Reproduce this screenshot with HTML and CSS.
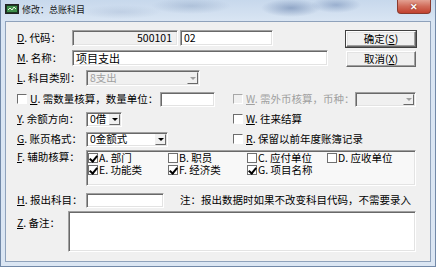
FILE: index.html
```html
<!DOCTYPE html>
<html lang="zh-CN">
<head>
    <meta charset="UTF-8">
    <title>修改：总账科目</title>
    <link rel="stylesheet" href="styles.css">
</head>
<body>
    <div class="window">
        <div class="titlebar">
            <svg class="app-icon" width="14" height="10" viewBox="0 0 14 10">
                <rect x="0.5" y="0.5" width="13" height="9" fill="#1c3a24" stroke="#222"/>
                <rect x="2" y="2" width="10" height="6" fill="#3f8f4a"/>
                <path d="M3 6 L5 4 L7 6 L9 3 L11 5" fill="none" stroke="#e8f5e0" stroke-width="1"/>
            </svg>
            <span class="title">修改：总账科目</span>
            <span class="close-btn">✕</span>
        </div>

        <div class="client">
            <div class="top-section">
                <div class="top-fields">
                    <div class="row">
                        <span class="label label-sm"><u>D</u>. 代码：</span>
                        <span class="field field-readonly field-code">500101</span>
                        <span class="field field-sub">02</span>
                    </div>
                    <div class="row row-gap">
                        <span class="label label-sm"><u>M</u>. 名称：</span>
                        <span class="field field-name">项目支出</span>
                    </div>
                    <div class="row row-gap">
                        <span class="label"><u>L</u>. 科目类别：</span>
                        <span class="select select-disabled select-type">
                            <span class="select-text">8支出</span>
                            <span class="select-arrow"></span>
                        </span>
                    </div>
                </div>
                <div class="buttons">
                    <span class="btn btn-default">确定(<u>S</u>)</span>
                    <span class="btn">取消(<u>X</u>)</span>
                </div>
            </div>

            <div class="options">
                <div class="row">
                    <span class="cbox"></span>
                    <span class="opt-label"><u>U</u>. 需数量核算，数量单位：</span>
                    <span class="field field-unit"></span>
                </div>
                <div class="row">
                    <span class="cbox cbox-disabled"></span>
                    <span class="opt-text disabled"><u>W</u>. 需外币核算，币种：</span>
                    <span class="select select-disabled select-currency">
                        <span class="select-text"></span>
                        <span class="select-arrow"></span>
                    </span>
                </div>

                <div class="row">
                    <span class="label"><u>Y</u>. 余额方向：</span>
                    <span class="select select-dir">
                        <span class="select-text">0借</span>
                        <span class="select-arrow"></span>
                    </span>
                </div>
                <div class="row">
                    <span class="cbox"></span>
                    <span class="opt-text"><u>W</u>. 往来结算</span>
                </div>

                <div class="row">
                    <span class="label"><u>G</u>. 账页格式：</span>
                    <span class="select select-format">
                        <span class="select-text">0金额式</span>
                        <span class="select-arrow"></span>
                    </span>
                </div>
                <div class="row">
                    <span class="cbox"></span>
                    <span class="opt-text"><u>R</u>. 保留以前年度账簿记录</span>
                </div>
            </div>

            <div class="row-aux">
                <span class="label"><u>F</u>. 辅助核算：</span>
                <div class="aux-box">
                    <span class="aux-item"><span class="chk checked"></span>A. 部门</span>
                    <span class="aux-item"><span class="chk"></span>B. 职员</span>
                    <span class="aux-item"><span class="chk"></span>C. 应付单位</span>
                    <span class="aux-item"><span class="chk"></span>D. 应收单位</span>
                    <span class="aux-item"><span class="chk checked"></span>E. 功能类</span>
                    <span class="aux-item"><span class="chk checked"></span>F. 经济类</span>
                    <span class="aux-item"><span class="chk checked"></span>G. 项目名称</span>
                </div>
            </div>

            <div class="row row-report">
                <span class="label"><u>H</u>. 报出科目：</span>
                <span class="field field-report"></span>
                <span class="note">注：报出数据时如果不改变科目代码，不需要录入</span>
            </div>

            <div class="row-memo">
                <span class="label label-memo"><u>Z</u>. 备注：</span>
                <span class="field memo"></span>
            </div>
        </div>
    </div>
</body>
</html>
```

FILE: styles.css
```css
/* Base */
* {
    margin: 0;
    padding: 0;
    box-sizing: border-box;
}

body {
    width: 436px;
    height: 267px;
    overflow: hidden;
    font-family: "Noto Sans CJK SC", "Noto Sans", sans-serif;
    font-size: 10.5px;
    line-height: 12px;
    color: #000;
    background: #d6e3f2;
}

u {
    text-decoration: underline;
    text-underline-offset: 1px;
}

/* Window frame */
.window {
    width: 436px;
    height: 267px;
    display: flex;
    flex-direction: column;
    padding: 0 4px 4px;
    border: 1px solid #7289a8;
    border-top: none;
    background:
        radial-gradient(ellipse 40px 8px at 190px 6px, rgba(120, 145, 180, 0.35), transparent),
        radial-gradient(ellipse 30px 9px at 290px 8px, rgba(70, 100, 150, 0.45), transparent),
        radial-gradient(ellipse 25px 8px at 335px 5px, rgba(80, 110, 160, 0.4), transparent),
        radial-gradient(ellipse 40px 7px at 120px 12px, rgba(150, 170, 200, 0.3), transparent),
        linear-gradient(to bottom, #c7d8ec 0, #d9e5f3 21px, #dbe6f3 100%);
}

.titlebar {
    height: 21px;
    display: flex;
    align-items: flex-start;
}

.app-icon {
    margin-top: 4px;
    flex-shrink: 0;
}

.title {
    margin-left: 3px;
    margin-top: 4px;
    font-size: 9px;
    line-height: 11px;
    color: #1a1a1a;
}

.close-btn {
    margin-left: auto;
    width: 34px;
    height: 14px;
    display: flex;
    align-items: center;
    justify-content: center;
    color: #fff;
    font-size: 9px;
    font-weight: bold;
    background: linear-gradient(to bottom, #e3a192 0, #d06a58 50%, #c2412f 100%);
    border: 1px solid #8a3a2e;
    border-top: none;
    border-radius: 0 0 4px 4px;
    text-shadow: 0 0 2px #6b1e14;
}

.client {
    flex: 1;
    background: #f0f0f0;
    border: 1px solid #8fa2bb;
    padding: 8px 14px 0 11px;
}

/* Rows and labels */
.row {
    height: 16px;
    display: flex;
    align-items: center;
}

.row-gap {
    margin-top: 4px;
}

.label {
    width: 69px;
    flex-shrink: 0;
    white-space: nowrap;
}

.label-sm {
    width: 55px;
}

/* Sunken classic field */
.field {
    height: 16px;
    display: flex;
    align-items: center;
    padding: 0 3px;
    background: #fff;
    border: 1px solid;
    border-color: #a0a0a0 #fff #fff #a0a0a0;
    box-shadow: inset 1px 1px 0 #696969, inset -1px -1px 0 #e3e3e3;
    white-space: nowrap;
}

.field-readonly {
    background: #f0f0f0;
    justify-content: flex-end;
    padding-right: 5px;
}

.field-code { width: 106px; }
.field-sub { width: 93px; margin-left: 2px; }
.field-name { width: 256px; font-size: 11px; }
.field-unit { width: 55px; height: 15px; }
.field-report { width: 78px; height: 15px; }

/* Top section with buttons */
.top-section {
    display: flex;
}

.top-fields {
    flex: 1;
}

.buttons {
    width: 70px;
    margin-top: 1px;
    display: flex;
    flex-direction: column;
    gap: 4px;
}

.btn {
    height: 16px;
    display: flex;
    align-items: center;
    justify-content: center;
    background: #f0f0f0;
    border: 1px solid;
    border-color: #fff #696969 #696969 #fff;
    box-shadow: inset -1px -1px 0 #a0a0a0, inset 1px 1px 0 #e3e3e3;
}

.btn-default {
    outline: 1px solid #404040;
    outline-offset: 0;
}

/* Combo boxes */
.select {
    height: 16px;
    display: flex;
    align-items: center;
    background: #fff;
    border: 1px solid;
    border-color: #a0a0a0 #fff #fff #a0a0a0;
    box-shadow: inset 1px 1px 0 #696969, inset -1px -1px 0 #e3e3e3;
    padding: 1px;
}

.select-text {
    flex: 1;
    padding-left: 2px;
    line-height: 12px;
    white-space: nowrap;
}

.select-arrow {
    width: 11px;
    align-self: stretch;
    display: flex;
    align-items: center;
    justify-content: center;
    background: #f0f0f0;
    border: 1px solid;
    border-color: #f0f0f0 #696969 #696969 #f0f0f0;
}

.select-arrow::after {
    content: "";
    border-left: 3px solid transparent;
    border-right: 3px solid transparent;
    border-top: 3px solid #000;
}

.select-disabled {
    background: #f0f0f0;
    color: #a0a0a0;
}

.select-disabled .select-arrow::after {
    border-top-color: #a0a0a0;
}

.select-type { width: 114px; }
.select-dir { width: 36px; height: 15px; }
.select-format { width: 82px; height: 15px; }
.select-currency { width: 61px; height: 15px; margin-left: auto; }

/* Option grid */
.options {
    margin-top: 5px;
    display: grid;
    grid-template-columns: 216px 1fr;
    row-gap: 4px;
}

.cbox {
    width: 10px;
    height: 10px;
    flex-shrink: 0;
    background: #fff;
    border: 1px solid;
    border-color: #6d6d6d #fff #fff #6d6d6d;
}

.cbox-disabled {
    border-color: #a8a8a8 #fff #fff #a8a8a8;
    background: #f0f0f0;
}

.opt-label {
    width: 130px;
    margin-left: 3px;
    white-space: nowrap;
}

.opt-text {
    margin-left: 3px;
    white-space: nowrap;
}

.disabled {
    color: #a0a0a0;
}

/* Auxiliary checklist */
.row-aux {
    margin-top: 3px;
    display: flex;
}

.row-aux .label {
    padding-top: 1px;
}

.aux-box {
    flex: 1;
    height: 36px;
    background: #f8f8f8;
    border: 1px solid;
    border-color: #a0a0a0 #fff #fff #a0a0a0;
    box-shadow: inset 1px 1px 0 #696969, inset -1px -1px 0 #e3e3e3;
    padding: 1px 0 0 1px;
    display: grid;
    grid-template-columns: 80px 79px 80px 1fr;
    grid-auto-rows: 12px;
}

.aux-item {
    display: flex;
    align-items: center;
    white-space: nowrap;
}

.chk {
    width: 10px;
    height: 10px;
    margin-right: 1px;
    flex-shrink: 0;
    position: relative;
    background: #fff;
    border: 1px solid #707070;
}

.chk.checked::after {
    content: "";
    position: absolute;
    left: 2px;
    top: 0;
    width: 3px;
    height: 6px;
    border-right: 2px solid #000;
    border-bottom: 2px solid #000;
    transform: rotate(40deg);
}

/* Report row and memo */
.row-report {
    margin-top: 6px;
}

.note {
    margin-left: 16px;
    white-space: nowrap;
}

.row-memo {
    margin-top: 3px;
    display: flex;
}

.label-memo {
    width: 51px;
    padding-top: 6px;
}

.memo {
    flex: 1;
    height: 41px;
}
```
